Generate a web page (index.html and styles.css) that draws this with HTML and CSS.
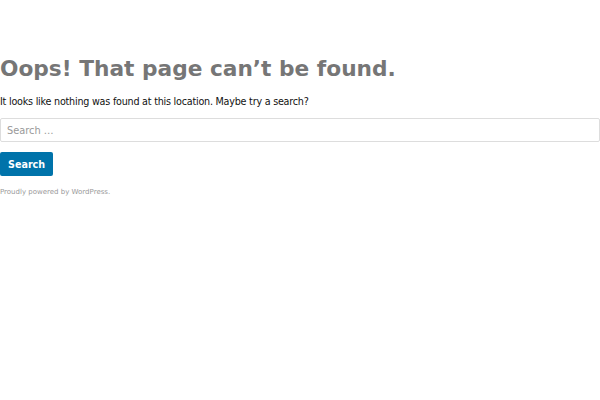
FILE: index.html
```html
<!DOCTYPE html>
<html>
<head>
  <title>Page not found</title>
  <link rel="stylesheet" href="styles.css">
</head>
<body>
  <div id="page">
    <main class="site-main">
      <section class="error-404">
        <header class="page-header">
          <h1 class="page-title">Oops! That page can’t be found.</h1>
        </header>
        <div class="page-content">
          <p>It looks like nothing was found at this location. Maybe try a search?</p>
          <form class="search-form">
            <input type="search" class="search-field" placeholder="Search …">
            <button type="button" class="search-submit">Search</button>
          </form>
        </div>
      </section>
    </main>
    <footer class="site-footer">
      <a href="#">Proudly powered by WordPress</a>.
    </footer>
  </div>
</body>
</html>
```

FILE: styles.css
```css
body {
  margin: 0;
  font-family: "DejaVu Sans", sans-serif;
  color: #111;
  background: #fff;
}

#page {
  padding-top: 56px;
}

.page-title {
  font-size: 21.7px;
  font-weight: bold;
  color: #767676;
  margin: 0 0 13px;
  line-height: 1.2;
}

.page-content p {
  font-size: 9.6px;
  letter-spacing: -0.22px;
  margin: 0 0 10px;
  line-height: 1.4;
}

.search-form {
  display: flex;
  flex-direction: column;
  align-items: flex-start;
  gap: 10px;
}

.search-field {
  box-sizing: border-box;
  width: 100%;
  height: 24px;
  margin: 0;
  padding: 0 6px;
  border: 1px solid #ddd;
  border-radius: 2px;
  font-family: "DejaVu Sans", sans-serif;
  font-size: 9.8px;
  color: #333;
}

.search-field::placeholder {
  color: #999;
}

.search-submit {
  height: 24px;
  padding: 0 8px;
  border: 0;
  border-radius: 2px;
  background: #0073aa;
  color: #fff;
  font-family: "DejaVu Sans", sans-serif;
  font-size: 9.6px;
  font-weight: bold;
}

.site-footer {
  margin-top: 12px;
  font-size: 7px;
  color: #999;
}

.site-footer a {
  color: #999;
  text-decoration: none;
}
```
